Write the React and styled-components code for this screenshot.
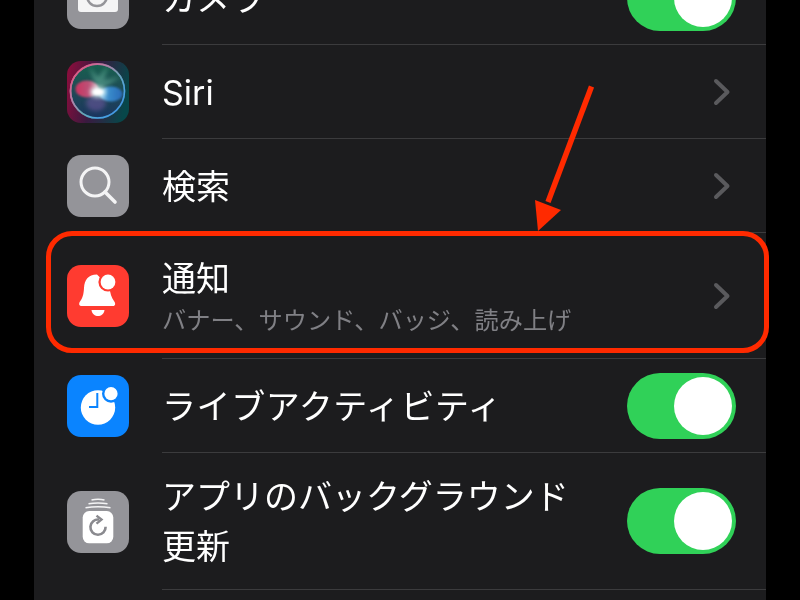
import React from "react";
import styled, { createGlobalStyle } from "styled-components";

const Global = createGlobalStyle`
  html, body { margin: 0; padding: 0; background: #000; overflow: hidden; }
`;

const Page = styled.div`
  position: relative;
  width: 800px;
  height: 600px;
  overflow: hidden;
  background: #000;
  font-family: Inter, "Noto Sans CJK JP", sans-serif;
`;

const Panel = styled.main`
  width: 732px;
  height: 600px;
  margin: 0 34px;
  background: #1c1c1e;
  filter: blur(0.35px);
`;

const List = styled.ul`
  list-style: none;
  margin: 0;
  padding: 0;
  transform: translateY(-49px);
`;

const Row = styled.li`
  position: relative;
  display: flex;
  align-items: center;
  height: ${(p) => p.$height}px;
  padding-left: 33px;
`;

const IconBox = styled.svg`
  display: block;
  flex: none;
  width: 62px;
  height: 62px;
  border-radius: 14px;
`;

const Body = styled.div`
  flex: 1;
  align-self: stretch;
  display: flex;
  align-items: center;
  justify-content: space-between;
  margin-left: 33px;
  padding: 0 30px 0 0;
  border-bottom: 1px solid #3b3b3d;
`;

const Labels = styled.div`
  display: flex;
  flex-direction: column;
  min-width: 0;
  padding-top: 2px;
`;

const Title = styled.div`
  color: #fff;
  font-size: 34px;
  line-height: 50px;
  letter-spacing: ${(p) => p.$spacing || 0}px;
  width: ${(p) => (p.$wrap ? "420px" : "auto")};
`;

const Subtitle = styled.div`
  color: #808085;
  font-size: 24.2px;
  line-height: 32px;
  margin-top: 4px;
`;

const Stack = styled.div`
  display: flex;
  flex-direction: column;
  margin-top: 2px;
  ${Title} { line-height: 44px; }
`;

const ChevronIcon = styled.svg`
  display: block;
  width: 18px;
  height: 28px;
  margin-right: 5px;
`;

const Toggle = styled.div`
  width: 109px;
  height: 66px;
  flex: none;
  box-sizing: border-box;
  padding: 4px 4px 4px 47px;
  border-radius: 33px;
  background: #30d158;
`;

const Knob = styled.div`
  width: 58px;
  height: 58px;
  border-radius: 50%;
  background: #fff;
`;

const Frame = styled.div`
  position: absolute;
  left: 12px;
  top: -2px;
  width: 723px;
  height: 122px;
  box-sizing: border-box;
  border: 5.5px solid #ff2a00;
  border-radius: 26px;
  pointer-events: none;
`;

const Arrow = styled.svg`
  position: absolute;
  left: 525px;
  top: 80px;
  width: 80px;
  height: 160px;
`;

const Chevron = () => (
  <ChevronIcon viewBox="0 0 18 28">
    <path d="M3 3 L14.5 14 L3 25" fill="none" stroke="#5a5a5d" strokeWidth="4" strokeLinecap="round" strokeLinejoin="round" />
  </ChevronIcon>
);

const Switch = () => (
  <Toggle>
    <Knob />
  </Toggle>
);

const CameraIcon = () => (
  <IconBox viewBox="0 0 62 62">
    <rect width="62" height="62" fill="#949499" />
    <rect x="11" y="18" width="40" height="27" rx="3" fill="#f4f4f5" />
    <circle cx="30" cy="29" r="10" fill="none" stroke="#949499" strokeWidth="2.5" />
  </IconBox>
);

const SiriIcon = () => (
  <IconBox viewBox="0 0 62 62">
    <defs>
      <linearGradient id="siriBg" x1="0" y1="0.2" x2="1" y2="0.4">
        <stop offset="0" stopColor="#8a0d3c" />
        <stop offset="0.45" stopColor="#3a1a40" />
        <stop offset="1" stopColor="#07474a" />
      </linearGradient>
      <linearGradient id="siriInner" x1="0.5" y1="0" x2="0.5" y2="1">
        <stop offset="0" stopColor="#17604f" />
        <stop offset="0.5" stopColor="#1f4a55" />
        <stop offset="1" stopColor="#1a3560" />
      </linearGradient>
      <linearGradient id="siriRing" x1="0" y1="0.1" x2="0.9" y2="0.9">
        <stop offset="0" stopColor="#e06a80" />
        <stop offset="0.3" stopColor="#9fbfa8" />
        <stop offset="0.55" stopColor="#30d79a" />
        <stop offset="0.8" stopColor="#38b4e8" />
        <stop offset="1" stopColor="#3f8fe0" />
      </linearGradient>
      <linearGradient id="siriRingLow" x1="0" y1="0" x2="1" y2="1">
        <stop offset="0" stopColor="#ee4a70" />
        <stop offset="0.5" stopColor="#b070c0" stopOpacity="0.6" />
        <stop offset="1" stopColor="#40a0e8" stopOpacity="0" />
      </linearGradient>
      <linearGradient id="siriPink" x1="0" y1="0" x2="1" y2="0">
        <stop offset="0" stopColor="#e82f62" />
        <stop offset="0.6" stopColor="#d8557f" />
        <stop offset="1" stopColor="#ffd0dc" />
      </linearGradient>
      <linearGradient id="siriBlue" x1="0" y1="0" x2="1" y2="0">
        <stop offset="0" stopColor="#a8e0ff" />
        <stop offset="0.4" stopColor="#3f98e0" />
        <stop offset="1" stopColor="#2a70c8" />
      </linearGradient>
      <filter id="siriSoft" x="-30%" y="-30%" width="160%" height="160%">
        <feGaussianBlur stdDeviation="0.8" />
      </filter>
      <filter id="siriGlow" x="-80%" y="-80%" width="260%" height="260%">
        <feGaussianBlur stdDeviation="2" />
      </filter>
    </defs>
    <rect width="62" height="62" fill="url(#siriBg)" />
    <circle cx="30.5" cy="30" r="27" fill="url(#siriInner)" />
    <path d="M31 31 L22 6 L31 16 L41 5 L37 19 L53 16 Z" fill="#8fe8c4" opacity="0.35" filter="url(#siriGlow)" />
    <ellipse cx="29" cy="42" rx="10" ry="8" fill="#7a5aa8" opacity="0.5" filter="url(#siriGlow)" />
    <ellipse cx="20" cy="28" rx="11.5" ry="8.5" fill="url(#siriPink)" opacity="0.85" filter="url(#siriSoft)" />
    <ellipse cx="44" cy="33" rx="11.5" ry="7.5" fill="url(#siriBlue)" opacity="0.85" filter="url(#siriSoft)" />
    <circle cx="30.5" cy="30" r="27" fill="none" stroke="url(#siriRing)" strokeWidth="1.6" />
    <circle cx="30.5" cy="30" r="27" fill="none" stroke="url(#siriRingLow)" strokeWidth="1.8" />
    <ellipse cx="31" cy="31" rx="8" ry="5.5" fill="#e8ffff" opacity="0.8" filter="url(#siriGlow)" />
    <ellipse cx="31" cy="31" rx="5" ry="3.2" fill="#fff" filter="url(#siriSoft)" />
  </IconBox>
);

const SearchIcon = () => (
  <IconBox viewBox="0 0 62 62">
    <rect width="62" height="62" fill="#949499" />
    <circle cx="28" cy="27" r="14" fill="none" stroke="#f4f4f5" strokeWidth="3" />
    <path d="M38 37 L48 47" stroke="#f4f4f5" strokeWidth="3.6" strokeLinecap="round" />
  </IconBox>
);

const BellIcon = () => (
  <IconBox viewBox="0 0 62 62">
    <rect width="62" height="62" fill="#ff3b30" />
    <path
      d="M30 9.5 C21 9.5 17.5 15 17 23 C16.6 30 15.5 33 13 36.5 C11.5 38.8 12 41 14.5 41 H46 C48.4 41 48.8 38.8 47.3 36.5 C44.5 33 43 28 42.5 22 Z"
      fill="#fff"
    />
    <path d="M24.5 45 H37.5 C37 49 34 51 31 51 C28 51 25 49 24.5 45 Z" fill="#fff" />
    <circle cx="41" cy="17" r="9.6" fill="#ff3b30" />
    <circle cx="41" cy="17" r="7.4" fill="#fff" />
  </IconBox>
);

const ClockIcon = () => (
  <IconBox viewBox="0 0 62 62">
    <rect width="62" height="62" fill="#0a84ff" />
    <circle cx="31" cy="32.5" r="17.2" fill="#fff" />
    <circle cx="44" cy="18.7" r="9" fill="#0a84ff" />
    <circle cx="44" cy="18.7" r="6.6" fill="#fff" />
    <path d="M30.3 18 V32 H22" fill="none" stroke="#0a84ff" strokeWidth="2" />
  </IconBox>
);

const RefreshIcon = () => (
  <IconBox viewBox="0 0 62 62">
    <rect width="62" height="62" fill="#949499" />
    <path d="M24.5 9 Q31 7.6 37.5 9" fill="none" stroke="#f4f4f5" strokeWidth="1.5" />
    <path d="M21.5 12.8 Q31 11 40.5 12.8" fill="none" stroke="#f4f4f5" strokeWidth="1.5" />
    <path d="M18.5 16.8 Q31 14.5 43.5 16.8" fill="none" stroke="#f4f4f5" strokeWidth="1.5" />
    <rect x="15.7" y="20" width="30.6" height="32.3" rx="6.5" fill="#fff" />
    <path d="M32 28.6 A7.6 7.6 0 1 0 38.6 35.8" fill="none" stroke="#8a8a8f" strokeWidth="2.6" />
    <path d="M29.5 24.6 L34.5 28.6 L29.5 32.6" fill="none" stroke="#8a8a8f" strokeWidth="2.4" />
  </IconBox>
);

const ArrowMark = () => (
  <Arrow viewBox="0 0 80 160">
    <path d="M66.5 6.5 L23 122" stroke="#ff2a00" strokeWidth="5.5" fill="none" />
    <path d="M10 120 L36 130 L13 151 Z" fill="#ff2a00" />
  </Arrow>
);

const rows = [
  { icon: <CameraIcon />, title: "カメラ", control: "switch", height: 94 },
  { icon: <SiriIcon />, title: "Siri", control: "chevron", height: 94 },
  { icon: <SearchIcon />, title: "検索", control: "chevron", height: 94 },
  { icon: <BellIcon />, title: "通知", subtitle: "バナー、サウンド、バッジ、読み上げ", control: "chevron", height: 126, framed: true },
  { icon: <ClockIcon />, title: "ライブアクティビティ", control: "switch", height: 94, spacing: 0.6 },
  { icon: <RefreshIcon />, title: "アプリのバックグラウンド更新", control: "switch", height: 137, wrap: true },
];

export default function App() {
  return (
    <Page>
      <Global />
      <Panel>
        <List>
          {rows.map((r) => (
            <Row key={r.title} $height={r.height}>
              {r.icon}
              <Body>
                {r.subtitle ? (
                  <Stack>
                    <Title>{r.title}</Title>
                    <Subtitle>{r.subtitle}</Subtitle>
                  </Stack>
                ) : (
                  <Labels>
                    <Title $wrap={r.wrap} $spacing={r.spacing}>{r.title}</Title>
                  </Labels>
                )}
                {r.control === "switch" ? <Switch /> : <Chevron />}
              </Body>
              {r.framed && <Frame />}
            </Row>
          ))}
        </List>
      </Panel>
      <ArrowMark />
    </Page>
  );
}
